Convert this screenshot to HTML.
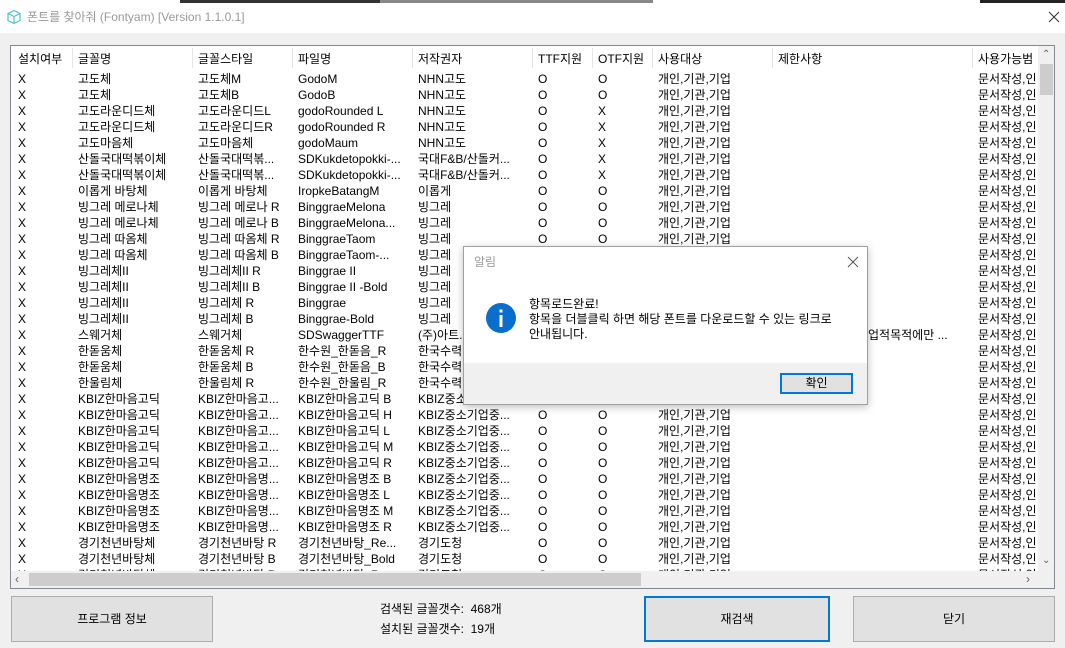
<!DOCTYPE html>
<html><head><meta charset="utf-8"><style>
*{margin:0;padding:0;box-sizing:border-box}
body{width:1065px;height:648px;background:#f0f0f0;position:relative;overflow:hidden;font-family:"Liberation Sans","Noto Sans CJK KR",sans-serif;font-size:12px;color:#000}
.a{position:absolute;white-space:nowrap;line-height:16px}
#title{position:absolute;left:0;top:0;width:1065px;height:33px;background:#fff}
#list{position:absolute;left:10px;top:45px;width:1045px;height:544px;background:#fff;border:1px solid #828790;overflow:hidden}
.r{position:absolute;left:0;height:16px;width:1030px}
.r span{position:absolute;top:0;line-height:16px;white-space:nowrap}
.c1{left:7px}.c2{left:67px}.c3{left:187px}.c4{left:287px}.c5{left:407px}.c6{left:527px}.c7{left:587px}.c8{left:647px}.c9{left:767px}.c10{left:967px}
.sep{position:absolute;top:2px;width:1px;height:20px;background:#e5e5e5}
.btn{position:absolute;background:#e1e1e1;border:1px solid #adadad;text-align:center;font-size:12px}
</style></head><body>
<div id="title">
<div style="position:absolute;left:180px;top:0;width:200px;height:3px;background:#333"></div>
<div style="position:absolute;left:380px;top:0;width:273px;height:3px;background:#888"></div>
<div style="position:absolute;left:980px;top:0;width:85px;height:3px;background:#222"></div>
<svg style="position:absolute;left:6px;top:9px" width="16" height="16" viewBox="0 0 16 16"><path d="M8 1.5L14 4.5V11.5L8 14.5L2 11.5V4.5Z M2 4.5L8 7.5L14 4.5 M8 7.5V14.5" fill="none" stroke="#4cc6c6" stroke-width="1.2"/></svg>
<div class="a" style="left:27px;top:9px;color:#999">폰트를 찾아줘 (Fontyam) [Version 1.1.0.1]</div>
<svg style="position:absolute;left:1048px;top:11px" width="12" height="12" viewBox="0 0 12 12"><path d="M1 1L11 11M11 1L1 11" stroke="#333" stroke-width="1"/></svg>
</div>
<div id="list">
<div class="r hd" style="top:5px">
<span class="c1">설치여부</span><span class="c2">글꼴명</span><span class="c3">글꼴스타일</span><span class="c4">파일명</span><span class="c5">저작권자</span><span class="c6">TTF지원</span><span class="c7">OTF지원</span><span class="c8">사용대상</span><span class="c9">제한사항</span><span class="c10">사용가능범</span>
</div>
<div class="sep" style="left:61px"></div><div class="sep" style="left:181px"></div><div class="sep" style="left:281px"></div><div class="sep" style="left:401px"></div><div class="sep" style="left:521px"></div><div class="sep" style="left:581px"></div><div class="sep" style="left:641px"></div><div class="sep" style="left:761px"></div><div class="sep" style="left:961px"></div>
<div id="rows"></div>
<div style="position:absolute;left:1027px;top:0;width:17px;height:525px;background:#f0f0f0"></div>
<div style="position:absolute;left:1029px;top:18px;width:13px;height:31px;background:#cdcdcd"></div>
<div class="a" style="left:1031px;top:1px;font-size:10px;color:#606060">&#8963;</div>
<div class="a" style="left:1031px;top:507px;font-size:10px;color:#606060">&#8964;</div>
<div style="position:absolute;left:0;top:525px;width:1044px;height:17px;background:#f0f0f0"></div>
<div style="position:absolute;left:18px;top:527px;width:612px;height:13px;background:#cdcdcd"></div>
<div class="a" style="left:4px;top:525px;color:#606060">&#8249;</div>
<div class="a" style="left:1015px;top:525px;color:#606060">&#8250;</div>
</div>
<script>
var d=[
["고도체","고도체M","GodoM","NHN고도","O","O"],
["고도체","고도체B","GodoB","NHN고도","O","O"],
["고도라운디드체","고도라운디드L","godoRounded L","NHN고도","O","X"],
["고도라운디드체","고도라운디드R","godoRounded R","NHN고도","O","X"],
["고도마음체","고도마음체","godoMaum","NHN고도","O","X"],
["산돌국대떡볶이체","산돌국대떡볶...","SDKukdetopokki-...","국대F&B/산돌커...","O","X"],
["산돌국대떡볶이체","산돌국대떡볶...","SDKukdetopokki-...","국대F&B/산돌커...","O","X"],
["이롭게 바탕체","이롭게 바탕체","IropkeBatangM","이롭게","O","O"],
["빙그레 메로나체","빙그레 메로나 R","BinggraeMelona","빙그레","O","O"],
["빙그레 메로나체","빙그레 메로나 B","BinggraeMelona...","빙그레","O","O"],
["빙그레 따옴체","빙그레 따옴체 R","BinggraeTaom","빙그레","O","O"],
["빙그레 따옴체","빙그레 따옴체 B","BinggraeTaom-...","빙그레","O","O"],
["빙그레체II","빙그레체II R","Binggrae II","빙그레","O","O"],
["빙그레체II","빙그레체II B","Binggrae II -Bold","빙그레","O","O"],
["빙그레체II","빙그레체 R","Binggrae","빙그레","O","O"],
["빙그레체II","빙그레체 B","Binggrae-Bold","빙그레","O","O"],
["스웨거체","스웨거체","SDSwaggerTTF","(주)아트...","O","O"],
["한돋움체","한돋움체 R","한수원_한돋음_R","한국수력...","O","O"],
["한돋움체","한돋움체 B","한수원_한돋음_B","한국수력...","O","O"],
["한울림체","한울림체 R","한수원_한울림_R","한국수력...","O","O"],
["KBIZ한마음고딕","KBIZ한마음고...","KBIZ한마음고딕 B","KBIZ중소기업중...","O","O"],
["KBIZ한마음고딕","KBIZ한마음고...","KBIZ한마음고딕 H","KBIZ중소기업중...","O","O"],
["KBIZ한마음고딕","KBIZ한마음고...","KBIZ한마음고딕 L","KBIZ중소기업중...","O","O"],
["KBIZ한마음고딕","KBIZ한마음고...","KBIZ한마음고딕 M","KBIZ중소기업중...","O","O"],
["KBIZ한마음고딕","KBIZ한마음고...","KBIZ한마음고딕 R","KBIZ중소기업중...","O","O"],
["KBIZ한마음명조","KBIZ한마음명...","KBIZ한마음명조 B","KBIZ중소기업중...","O","O"],
["KBIZ한마음명조","KBIZ한마음명...","KBIZ한마음명조 L","KBIZ중소기업중...","O","O"],
["KBIZ한마음명조","KBIZ한마음명...","KBIZ한마음명조 M","KBIZ중소기업중...","O","O"],
["KBIZ한마음명조","KBIZ한마음명...","KBIZ한마음명조 R","KBIZ중소기업중...","O","O"],
["경기천년바탕체","경기천년바탕 R","경기천년바탕_Re...","경기도청","O","O"],
["경기천년바탕체","경기천년바탕 B","경기천년바탕_Bold","경기도청","O","O"],
["경기천년바탕체","경기천년바탕 R","경기천년바탕_Re...","경기도청","O","O"]];
var h="";
for(var i=0;i<d.length;i++){var r=d[i];
h+='<div class="r" style="top:'+(25+i*16)+'px"><span class="c1">X</span><span class="c2">'+r[0]+'</span><span class="c3">'+r[1]+'</span><span class="c4">'+r[2]+'</span><span class="c5">'+r[3]+'</span><span class="c6">'+r[4]+'</span><span class="c7">'+r[5]+'</span><span class="c8">개인,기관,기업</span>'+(i==16?'<span style="left:857px">업적목적에만 ...</span>':'')+'<span class="c10">문서작성,인</span></div>';}
document.getElementById("rows").innerHTML=h;
</script>
<div style="position:absolute;left:463px;top:246px;width:405px;height:159px;background:#fff;border:1px solid #a0a0a0;box-shadow:0 2px 8px rgba(0,0,0,.25)">
<div class="a" style="left:10px;top:7px;color:#999">알림</div>
<svg style="position:absolute;left:383px;top:9px" width="12" height="12" viewBox="0 0 12 12"><path d="M1 1L11 11M11 1L1 11" stroke="#555" stroke-width="1"/></svg>
<svg style="position:absolute;left:21px;top:55px" width="32" height="32" viewBox="0 0 32 32"><circle cx="16" cy="16" r="15" fill="#0a6fcc"/><rect x="14.5" y="13" width="3" height="12" fill="#fff"/><rect x="14.5" y="7.5" width="3" height="3" fill="#fff"/></svg>
<div class="a" style="left:65px;top:50px;line-height:15px">항목로드완료!<br>항목을 더블클릭 하면 해당 폰트를 다운로드할 수 있는 링크로<br>안내됩니다.</div>
<div style="position:absolute;left:0;top:116px;width:403px;height:41px;background:#f0f0f0"></div>
<div class="btn" style="left:316px;top:126px;width:73px;height:21px;border:2px solid #0078d7;line-height:17px">확인</div>
</div>
<div class="btn" style="left:11px;top:596px;width:202px;height:46px;line-height:44px">프로그램 정보</div>
<div class="a" style="left:380px;top:601px">검색된 글꼴갯수:&nbsp;&nbsp;468개</div>
<div class="a" style="left:380px;top:621px">설치된 글꼴갯수:&nbsp;&nbsp;19개</div>
<div class="btn" style="left:644px;top:596px;width:186px;height:46px;line-height:42px;border:2px solid #0078d7">재검색</div>
<div class="btn" style="left:853px;top:596px;width:202px;height:46px;line-height:44px">닫기</div>
</body></html>
